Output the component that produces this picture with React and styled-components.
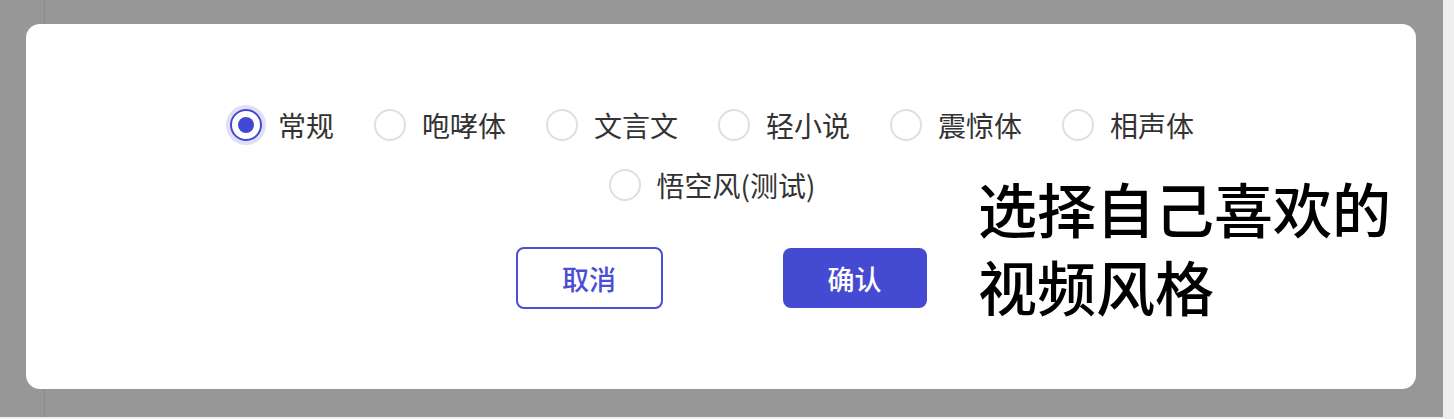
import React, { useState } from 'react'
import styled, { createGlobalStyle } from 'styled-components'

const styles = [
  { id: 'normal', label: '常规' },
  { id: 'roar', label: '咆哮体' },
  { id: 'classical', label: '文言文' },
  { id: 'novel', label: '轻小说' },
  { id: 'shock', label: '震惊体' },
  { id: 'crosstalk', label: '相声体' },
  { id: 'wukong', label: '悟空风(测试)' }
]

const GlobalStyle = createGlobalStyle`
  body {
    margin: 0;
    background: #efefef;
    font-family: 'Noto Sans CJK SC', 'Noto Sans', sans-serif;
  }
`

const Backdrop = styled.div`
  width: 1443px;
  height: 417px;
  box-sizing: border-box;
  padding: 24px 27px 0 26px;
  background:
    linear-gradient(to right, transparent 44px, #8b8b8b 44px, #8b8b8b 45px, transparent 45px),
    #979797;
`

const Modal = styled.div`
  position: relative;
  height: 365px;
  box-sizing: border-box;
  padding-top: 81px;
  background: #fff;
  border-radius: 14px;
  display: flex;
  flex-direction: column;
  align-items: center;
`

const Options = styled.div`
  width: 1100px;
  margin-right: 18px;
  display: flex;
  flex-wrap: wrap;
  justify-content: center;
  column-gap: 40px;
  row-gap: 20px;
`

const Option = styled.label`
  display: flex;
  align-items: center;
  gap: 16px;
  height: 40px;
  font-size: 28px;
  line-height: 40px;
  color: #333;
  cursor: pointer;
`

const Dot = styled.span`
  box-sizing: border-box;
  width: 32px;
  height: 32px;
  border-radius: 50%;
  border: 2px solid ${p => (p.$checked ? '#4348d3' : '#dedee3')};
  box-shadow: ${p => (p.$checked ? '0 0 0 4px #dfe0f7' : 'none')};
  display: flex;
  align-items: center;
  justify-content: center;

  &::after {
    content: '';
    width: 16px;
    height: 16px;
    border-radius: 50%;
    background: #4348d3;
    display: ${p => (p.$checked ? 'block' : 'none')};
  }
`

const Actions = styled.div`
  margin-top: 42px;
  display: flex;
  align-items: center;
  justify-content: center;
  gap: 120px;
`

const Button = styled.button`
  box-sizing: border-box;
  width: ${p => (p.$primary ? '144px' : '147px')};
  height: ${p => (p.$primary ? '60px' : '62px')};
  border-radius: 8px;
  border: ${p => (p.$primary ? 'none' : '2px solid #4a4fd6')};
  background: ${p => (p.$primary ? '#454ad3' : '#fff')};
  color: ${p => (p.$primary ? '#fff' : '#4a4fd6')};
  font-family: 'Noto Sans CJK SC', sans-serif;
  font-size: 27px;
  font-weight: 500;
  padding: 0;
  cursor: pointer;
`

const Caption = styled.div`
  position: absolute;
  left: 952px;
  top: 145px;
  font-size: 59px;
  font-weight: 500;
  line-height: 78px;
  color: #000;
  font-family: 'Noto Sans CJK SC', sans-serif;
`

export default function App() {
  const [value, setValue] = useState('normal')
  return (
    <>
      <GlobalStyle />
      <Backdrop>
        <Modal>
          <Options>
            {styles.map(s => (
              <Option key={s.id} onClick={() => setValue(s.id)}>
                <Dot $checked={value === s.id} />
                {s.label}
              </Option>
            ))}
          </Options>
          <Actions>
            <Button>取消</Button>
            <Button $primary>确认</Button>
          </Actions>
          <Caption>
            选择自己喜欢的
            <br />
            视频风格
          </Caption>
        </Modal>
      </Backdrop>
    </>
  )
}
